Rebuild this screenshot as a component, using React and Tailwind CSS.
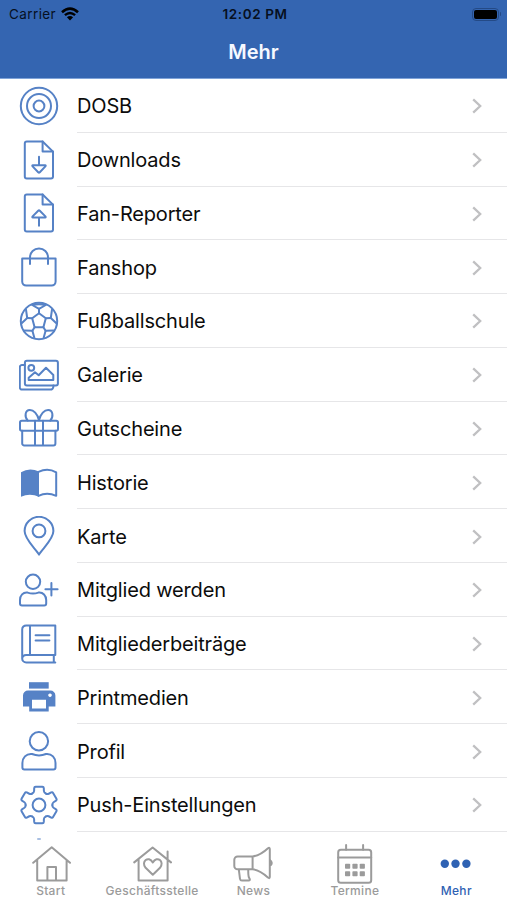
import React from "react";

const stroke = {
  fill: "none",
  stroke: "currentColor",
  strokeWidth: 2,
  strokeLinecap: "round",
  strokeLinejoin: "round",
};

const Icon = ({ children }) => (
  <svg viewBox="0 0 40 40" className="block h-10 w-10 shrink-0" {...stroke}>
    {children}
  </svg>
);

const Target = () => (
  <Icon>
    <circle cx="20" cy="20" r="18.2" />
    <circle cx="20" cy="20" r="12" />
    <circle cx="20" cy="20" r="5.4" />
  </Icon>
);

const File = ({ children }) => (
  <Icon>
    <path d="M7.8 1.5H23.6L34 11.6V36.4a2 2 0 0 1-2 2H7.8a2 2 0 0 1-2-2V3.5a2 2 0 0 1 2-2Z" />
    <path d="M23.6 1.5V11.4H34" />
    {children}
  </Icon>
);

const Download = () => (
  <File>
    <path d="M20 16.8V25.2M14 25.2H26Q27.2 25.4 26.4 26.4L20.8 32.2Q20 33 19.2 32.2L13.6 26.4Q12.8 25.4 14 25.2Z" />
  </File>
);

const Upload = () => (
  <File>
    <path d="M20 32.7V24.6M14 24.6H26Q27.2 24.4 26.4 23.4L20.8 17.8Q20 17 19.2 17.8L13.6 23.4Q12.8 24.4 14 24.6Z" />
  </File>
);

const Bag = () => (
  <Icon>
    <path d="M3.2 11.4H36.6V34.6a4 4 0 0 1-4 4H7.2a4 4 0 0 1-4-4Z" />
    <path d="M11 17V10.4a9 9 0 0 1 18 0V17" />
  </Icon>
);

const Ball = () => (
  <Icon>
    <circle cx="20" cy="20" r="18.2" />
    <path d="M20 12.2L26.8 17.3L24.4 26.2H15.6L13.2 17.3Z" />
    <path d="M20 12.2V7.8M26.8 17.3L31.8 17M24.4 26.2L26.6 29.8M15.6 26.2L13.4 29.8M13.2 17.3L8.2 17" />
    <path d="M20 7.8L13.2 4M20 7.8L26.8 4M13.2 4Q20 2.4 26.8 4M8.2 17L7 8.6M31.8 17L33 8.6M8.2 17L2.4 22.4M31.8 17L37.6 22.4M13.4 29.8L5.6 29.4M26.6 29.8L34.4 29.4M13.4 29.8L15.4 37M26.6 29.8L24.6 37" />
  </Icon>
);

const Gallery = () => (
  <Icon>
    <rect x="5.9" y="5.8" width="33" height="24.6" rx="2" />
    <path d="M5.9 10H3a2.2 2.2 0 0 0-2.2 2.2V32.4a2.2 2.2 0 0 0 2.2 2.2H31.4a3 3 0 0 0 3-3V30.4" />
    <circle cx="12.3" cy="12.8" r="2.9" />
    <path d="M9.7 25V22.8L16 17.2L19.7 20.2L27 12.7L34.3 20V25Z" />
  </Icon>
);

const Gift = () => (
  <Icon>
    <rect x="1" y="12.8" width="38" height="10" rx="1.8" />
    <path d="M3.2 22.8V35.4a2 2 0 0 0 2 2H34.4a2 2 0 0 0 2-2V22.8M16 12.8V37.4M24 12.8V37.4" />
    <path d="M20 12.2C18.5 6 14.5 1.8 10.8 1.9C6 2 5.2 9 8.8 12.6M20 12.2C21.5 6 25.5 1.8 29.2 1.9C34 2 34.8 9 31.2 12.6" />
  </Icon>
);

const Book = () => (
  <Icon>
    <path
      d="M2 10.3Q10.5 5 20 9.6V34.8Q11 30.6 2 34.7Z"
      fill="currentColor"
      stroke="none"
    />
    <path d="M19.5 9.8Q29 5.6 37.2 10.4V33.8Q28 29.8 19.5 33.8" />
  </Icon>
);

const Pin = () => (
  <Icon>
    <path d="M20 38.6C17 33 5.6 23.5 5.6 15A14.4 14.2 0 0 1 34.4 15C34.4 23.5 23 33 20 38.6Z" />
    <circle cx="20" cy="14.9" r="6.4" />
  </Icon>
);

const UserAdd = () => (
  <Icon>
    <circle cx="14" cy="11.8" r="7.2" />
    <path d="M8.6 22.6Q14 24.6 19.4 22.6C24 22 27.2 25.6 27.2 30V33.4a2 2 0 0 1-2 2H3a2 2 0 0 1-2-2V30C1 25.6 4 22 8.6 22.6Z" />
    <path d="M32.4 13V25.4M26.4 19.2H38.6" />
  </Icon>
);

const Notebook = () => (
  <Icon>
    <path d="M36.3 31V1.4H7.2A4 4 0 0 0 3.2 5.4V34.6A4 4 0 0 0 7.2 38.5H36.3M36.3 31H7.2A4 4 0 0 0 3.2 34.6M34.8 31V38.3M11 1.4V31M16.6 11.2H30.4M16.6 16.4H30.4" />
  </Icon>
);

const Printer = () => (
  <Icon>
    <g stroke="none" fill="currentColor">
      <path d="M10 5.2H29.7V11.6H10Z" />
      <path
        fillRule="evenodd"
        d="M9 13.6H31.4a5 5 0 0 1 5 5V29.6H29.7V34.6H10.2V29.6H4V18.6a5 5 0 0 1 5-5ZM13 22.8V31.6H27V22.8ZM31 16.4a1.8 1.8 0 1 0 .01 0Z"
      />
    </g>
  </Icon>
);

const User = () => (
  <Icon>
    <circle cx="19.9" cy="10.2" r="9.2" />
    <path d="M13 23Q20 25.8 27 23C33 22.4 36.5 27 36.5 32V36.6a2 2 0 0 1-2 2H5.4a2 2 0 0 1-2-2V32C3.4 27 7 22.4 13 23Z" />
  </Icon>
);

const Gear = () => (
  <Icon>
    {/* one tooth plus the valley to the next one, six times around */}
    {[0, 60, 120, 180, 240, 300].map((deg) => (
      <path
        key={deg}
        transform={`rotate(${deg} 20 20)`}
        d="M13.3 8.4Q14.9 7.8 15.1 6L15.2 3.1Q15.3 1.8 16.6 1.8H23.4Q24.7 1.8 24.8 3.1L24.9 6Q25.1 7.8 26.7 8.4"
      />
    ))}
    <circle cx="20" cy="20" r="6.4" />
  </Icon>
);

const Home = () => (
  <Icon>
    <path d="M2.2 18.8L20.7 3.2L39 18.8M6.2 16V36.6H35.6V16M16.4 36.6V23H25V36.6" />
  </Icon>
);

const HomeHeart = () => (
  <Icon>
    <path d="M2.2 18.4L20.6 3.5L39 18.4M6.6 15.4V36.6H35.6V7.4" />
    <path d="M20.8 30.8L13.6 23.8C8.6 17.8 16.4 11 20.8 18.4C25.2 11 33 17.8 28 23.8Z" />
  </Icon>
);

const Megaphone = () => (
  <Icon>
    <path d="M19.6 12.4H4.6A3.3 3.3 0 0 0 1.3 15.7V22A3.3 3.3 0 0 0 4.6 25.3H19.6ZM19.6 12.4C27 11.4 32 7 35 4.2Q36.7 3 36.8 5V33Q36.7 35 35 33.6C32 31 27 26.4 19.6 25.3M37.8 16.8Q39.6 18.9 37.8 21M5.8 25.3L7 34.8Q7.3 36.5 9 36.5H15.6Q17.4 36.3 16.6 34.6Q15 33 15.3 25.3" />
  </Icon>
);

const Calendar = () => (
  <Icon>
    <rect x="3.2" y="5.8" width="33" height="33" rx="2.6" />
    <path d="M3.2 13.6H36.2M11.1 5.8V1M28.1 5.8V1" />
    <g fill="currentColor" stroke="none">
      {[10, 17.4, 24.7].map((x) => (
        <React.Fragment key={x}>
          <rect x={x} y="19.8" width="5.2" height="5" rx="0.8" />
          <rect x={x} y="27.2" width="5.2" height="5" rx="0.8" />
        </React.Fragment>
      ))}
    </g>
  </Icon>
);

const Dots = () => (
  <Icon>
    <g fill="currentColor" stroke="none">
      <circle cx="8.8" cy="19.8" r="4.2" />
      <circle cx="19.5" cy="19.8" r="4.2" />
      <circle cx="30.4" cy="19.8" r="4.2" />
    </g>
  </Icon>
);

const items = [
  { name: "DOSB", icon: Target },
  { name: "Downloads", icon: Download },
  { name: "Fan-Reporter", icon: Upload },
  { name: "Fanshop", icon: Bag },
  { name: "Fußballschule", icon: Ball },
  { name: "Galerie", icon: Gallery },
  { name: "Gutscheine", icon: Gift },
  { name: "Historie", icon: Book },
  { name: "Karte", icon: Pin },
  { name: "Mitglied werden", icon: UserAdd },
  { name: "Mitgliederbeiträge", icon: Notebook },
  { name: "Printmedien", icon: Printer },
  { name: "Profil", icon: User },
  { name: "Push-Einstellungen", icon: Gear },
];

const tabs = [
  { name: "Start", icon: Home },
  { name: "Geschäftsstelle", icon: HomeHeart },
  { name: "News", icon: Megaphone },
  { name: "Termine", icon: Calendar },
  { name: "Mehr", icon: Dots, active: true },
];

const Header = () => (
  <header className="h-[79px] shrink-0 border-b border-[#7fa3d8] bg-[#3465b1]">
    <div className="grid h-7 grid-cols-3 items-center pr-[6px] pl-[9px] text-[13.5px] text-[#06101f]">
      <div className="flex items-center gap-[5px]">
        <span className="tracking-[0.4px]">Carrier</span>
        <svg viewBox="0 0 18 14" className="h-[14px] w-[18px]" fill="none" stroke="#000">
          <path d="M1 5.2Q9-2 17 5.2" strokeWidth="2.6" />
          <path d="M3.9 8.2Q9 3.8 14.1 8.2" strokeWidth="2.4" />
          <path d="M9 13.4L5.9 10.3Q9 7.8 12.1 10.3Z" fill="#000" stroke="none" />
        </svg>
      </div>
      <div className="text-center font-semibold tracking-[0.6px] whitespace-nowrap">
        12:02 PM
      </div>
      <div className="flex items-center justify-end gap-px">
        <div className="h-[13px] w-[27px] rounded-[4px] border border-[#244a86] p-[1px]">
          <div className="h-full rounded-[2px] bg-black" />
        </div>
        <div className="h-1 w-[1.5px] rounded-r bg-[#244a86]" />
      </div>
    </div>
    <h1 className="mt-[9px] text-center text-[20px] leading-[31px] font-semibold text-[#f6f9ff]">
      Mehr
    </h1>
  </header>
);

const Row = ({ name, icon: RowIcon }) => (
  <li className="flex h-[53.77px] items-center pl-[19px] text-[#5682c6]">
    <RowIcon />
    <div className="ml-[18px] flex h-full flex-1 items-center justify-between border-b border-[#e6e6e8] pt-[2px] pr-[25px]">
      <span className="text-[20px] tracking-[-0.17px] text-[#0c0c0c]">{name}</span>
      <svg
        viewBox="0 0 10 16"
        className="h-4 w-[10px]"
        fill="none"
        stroke="#c0c0c2"
        strokeWidth="2.3"
      >
        <path d="M1.2 1.4L8.2 8L1.2 14.6" />
      </svg>
    </div>
  </li>
);

const App = () => {
  return (
    <div className="flex h-[900px] w-[507px] flex-col overflow-hidden bg-white font-['Inter',sans-serif]">
      <Header />
      <ul className="h-[761px] shrink-0 overflow-hidden">
        {items.map((item) => (
          <Row key={item.name} {...item} />
        ))}
        {/* next row, only its tip peeks out above the tab bar */}
        <li className="pt-[6px] pl-[37px]">
          <div className="h-[2px] w-1 rounded-full bg-[#a9bfe2]" />
        </li>
      </ul>
      <nav className="grid flex-1 grid-cols-5 pt-[3.5px]">
        {tabs.map(({ name, icon: TabIcon, active }) => (
          <div
            key={name}
            className={
              "flex flex-col items-center " +
              (active ? "text-[#2f62b3]" : "text-[#9b9b9b]")
            }
          >
            <TabIcon />
            <span className="text-[12px] leading-[14px] font-medium tracking-[0.3px]">
              {name}
            </span>
          </div>
        ))}
      </nav>
    </div>
  );
};

export default App;
